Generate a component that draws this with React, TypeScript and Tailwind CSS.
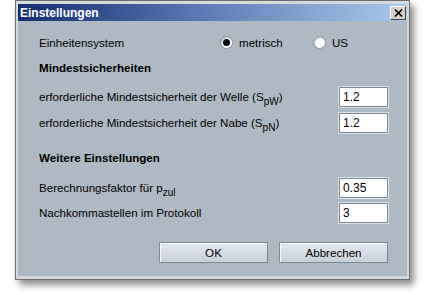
import { ReactNode } from "react";

const font = { fontFamily: '"Liberation Sans", Arial, sans-serif' };

function Sub({ children }: { children: ReactNode }) {
  return <span className="relative top-[4px] text-[10px]">{children}</span>;
}

function Radio({ checked, label }: { checked: boolean; label: string }) {
  return (
    <div className="flex items-center gap-[6px]">
      <div className="w-[13px] h-[13px] rounded-full bg-white border border-[#8a949e] shadow-[inset_1px_1px_1px_rgba(0,0,0,0.25)] flex items-center justify-center">
        {checked && <div className="w-[7px] h-[7px] rounded-full bg-black" />}
      </div>
      <span>{label}</span>
    </div>
  );
}

function Field({ label, value }: { label: ReactNode; value: string }) {
  return (
    <div className="flex items-center justify-between h-[20px]">
      <span>{label}</span>
      <div className="w-[49px] h-[20px] bg-white border border-[#7d8895] shadow-[0_0_0_1px_#dbe1e7] flex items-center px-[3px] text-[12px]">
        {value}
      </div>
    </div>
  );
}

function Button({ label }: { label: string }) {
  return (
    <div className="w-[109px] h-[21px] border border-[#7f8b97] bg-gradient-to-b from-[#e4e9ef] to-[#c8d0d9] shadow-[inset_1px_1px_0_#f4f7fa] flex items-center justify-center">
      {label}
    </div>
  );
}

export default function App() {
  return (
    <div className="w-[425px] h-[295px] bg-white pl-[15px]" style={font}>
      <div className="w-[395px] h-[280px] border border-[#6f6f6f] bg-[#d5d8dc] px-[2px] pt-[3px] pb-[2px] flex flex-col shadow-[4px_5px_7px_rgba(0,0,0,0.45)] text-[11.6px] text-black">
        <div className="h-[17px] bg-gradient-to-r from-[#132d72] via-[#5f80b6] to-[#a8cbf0] flex items-center justify-between pl-[2px] pr-[1px]">
          <span className="text-white font-bold text-[12px]">Einstellungen</span>
          <div className="w-[16px] h-[14px] bg-[#d4d0c8] border border-t-white border-l-white border-r-[#404040] border-b-[#404040] flex items-center justify-center">
            <svg width="9" height="8" viewBox="0 0 9 8">
              <path d="M1 0.5 L8 7.5 M8 0.5 L1 7.5" stroke="black" strokeWidth="1.6" />
            </svg>
          </div>
        </div>
        <div className="flex-1 bg-[#afb9c4] border-b border-[#c9d0d8] pl-[21px] pr-[19px] pt-[12px] flex flex-col">
          <div className="flex items-center h-[20px]">
            <span className="w-[181px]">Einheitensystem</span>
            <div className="w-[93px]">
              <Radio checked label="metrisch" />
            </div>
            <Radio checked={false} label="US" />
          </div>
          <div className="flex items-center h-[20px] mt-[5px] font-bold">Mindestsicherheiten</div>
          <div className="flex flex-col gap-[6px] mt-[9px]">
            <Field
              label={
                <>
                  erforderliche Mindestsicherheit der Welle (S<Sub>pW</Sub>)
                </>
              }
              value="1.2"
            />
            <Field
              label={
                <>
                  erforderliche Mindestsicherheit der Nabe (S<Sub>pN</Sub>)
                </>
              }
              value="1.2"
            />
          </div>
          <div className="flex items-center h-[20px] mt-[15px] font-bold">Weitere Einstellungen</div>
          <div className="flex flex-col gap-[5px] mt-[10px]">
            <Field
              label={
                <>
                  Berechnungsfaktor für p<Sub>zul</Sub>
                </>
              }
              value="0.35"
            />
            <Field label="Nachkommastellen im Protokoll" value="3" />
          </div>
          <div className="flex justify-end gap-[11px] mt-[19px]">
            <Button label="OK" />
            <Button label="Abbrechen" />
          </div>
        </div>
      </div>
    </div>
  );
}
